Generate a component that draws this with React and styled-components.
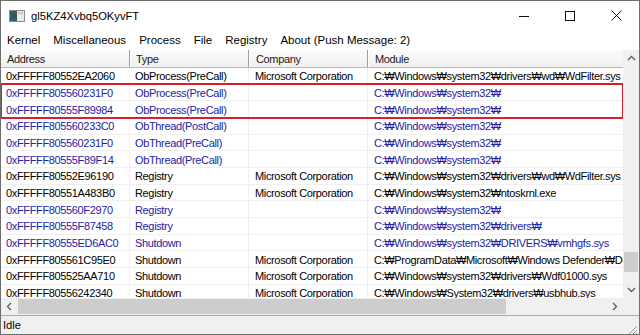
import React from "react";
import styled, { createGlobalStyle } from "styled-components";

const GlobalStyle = createGlobalStyle`
  html, body {
    margin: 0;
    padding: 0;
    background: #ffffff;
  }
  * {
    box-sizing: border-box;
  }
`;

const UI_FONT = `"Liberation Sans", Arial, "Noto Sans CJK KR", sans-serif`;
const ROW_H = 16.67;

const Window = styled.div`
  width: 640px;
  height: 335px;
  border: 1px solid #6e6e6e;
  background: #fff;
  display: flex;
  flex-direction: column;
  font-family: ${UI_FONT};
  overflow: hidden;
`;

const TitleBar = styled.div`
  height: 29px;
  display: flex;
  align-items: center;
  padding-left: 8px;
  background: #fff;
  flex-shrink: 0;
`;

const TitleText = styled.span`
  font-size: 11.2px;
  color: #000;
  margin-left: 6px;
  flex: 1;
`;

const Controls = styled.div`
  display: flex;
  height: 100%;
`;

const CtrlButton = styled.div`
  width: 46px;
  height: 100%;
  display: flex;
  align-items: center;
  justify-content: center;
`;

const MenuBar = styled.div`
  height: 20px;
  display: flex;
  align-items: center;
  padding-left: 0;
  flex-shrink: 0;
`;

const MenuItem = styled.span`
  font-size: 11.5px;
  color: #000;
  padding: 0 7px 0 6px;
`;

const Body = styled.div`
  display: flex;
  height: 248px;
  flex-shrink: 0;
`;

const ListArea = styled.div`
  position: relative;
  flex: 1;
  overflow: hidden;
  font-size: 11px;
  letter-spacing: -0.35px;
`;

const HeaderRow = styled.div`
  display: flex;
  height: 18px;
  background: linear-gradient(#fbfbfb, #f0f0f0);
  border-bottom: 1px solid #b8b8b8;
`;

const HeaderCell = styled.div`
  width: ${(p) => p.$w}px;
  flex-shrink: 0;
  padding-left: ${(p) => p.$pl}px;
  display: flex;
  align-items: center;
  border-right: 1px solid #9f9f9f;
  box-shadow: 1px 0 0 #fff;
  color: #1a1a1a;
  white-space: nowrap;
  flex-grow: ${(p) => (p.$grow ? 1 : 0)};
`;

const Row = styled.div`
  display: flex;
  height: ${ROW_H}px;
  color: ${(p) => (p.$blue ? "#2323a6" : "#000")};
  border-bottom: 1px solid #f0f0f0;
`;

const Cell = styled.div`
  width: ${(p) => p.$w}px;
  flex-shrink: 0;
  flex-grow: ${(p) => (p.$grow ? 1 : 0)};
  padding-left: ${(p) => p.$pl}px;
  padding-top: 1px;
  display: flex;
  align-items: center;
  border-right: 1px solid #f0f0f0;
  white-space: nowrap;
  overflow: hidden;
`;

const Highlight = styled.div`
  position: absolute;
  left: -1px;
  top: ${(p) => p.$top}px;
  width: 624px;
  height: 36px;
  border: 2px solid #d7202b;
  pointer-events: none;
`;

const VScroll = styled.div`
  width: 16px;
  display: flex;
  flex-direction: column;
  background: #f0f0f0;
`;

const ArrowBox = styled.div`
  height: 17px;
  display: flex;
  align-items: center;
  justify-content: center;
  flex-shrink: 0;
`;

const VTrack = styled.div`
  flex: 1;
  display: flex;
  flex-direction: column;
  padding-top: ${(p) => p.$offset}px;
`;

const VThumb = styled.div`
  height: 20px;
  margin: 0 1px;
  background: #cdcdcd;
`;

const HScrollRow = styled.div`
  height: 17px;
  display: flex;
  flex-shrink: 0;
`;

const HScroll = styled.div`
  flex: 1;
  display: flex;
  align-items: center;
  background: #f0f0f0;
`;

const HArrow = styled.div`
  width: 17px;
  height: 100%;
  display: flex;
  align-items: center;
  justify-content: center;
  flex-shrink: 0;
`;

const HTrack = styled.div`
  flex: 1;
  height: 100%;
  display: flex;
  align-items: center;
`;

const HThumb = styled.div`
  height: 15px;
  background: #cdcdcd;
`;

const Corner = styled.div`
  width: 16px;
  background: #f0f0f0;
`;

const StatusBar = styled.div`
  flex: 1;
  display: flex;
  align-items: center;
  background: #f0f0f0;
  border-top: 1px solid #a9a9a9;
`;

const StatusText = styled.span`
  font-size: 11.2px;
  color: #000;
  padding-left: 2px;
  flex: 1;
`;

const Grip = styled.div`
  width: 12px;
  height: 12px;
  align-self: flex-end;
  margin: 0 1px 1px 0;
`;

const COLS = [
  { w: 129, pl: 5 },
  { w: 119, pl: 5 },
  { w: 119, pl: 6 },
  { w: 260, pl: 6, grow: true },
];

const HEADERS = ["Address", "Type", "Company", "Module"];

const W = "\u20A9";
const MS = "Microsoft Corporation";

const rows = [
  ["0xFFFFF80552EA2060", "ObProcess(PreCall)", MS, `C:${W}Windows${W}system32${W}drivers${W}wd${W}WdFilter.sys`, false],
  ["0xFFFFF805560231F0", "ObProcess(PreCall)", "", `C:${W}Windows${W}system32${W}`, true],
  ["0xFFFFF80555F89984", "ObProcess(PreCall)", "", `C:${W}Windows${W}system32${W}`, true],
  ["0xFFFFF805560233C0", "ObThread(PostCall)", "", `C:${W}Windows${W}system32${W}`, true],
  ["0xFFFFF805560231F0", "ObThread(PreCall)", "", `C:${W}Windows${W}system32${W}`, true],
  ["0xFFFFF80555F89F14", "ObThread(PreCall)", "", `C:${W}Windows${W}system32${W}`, true],
  ["0xFFFFF80552E96190", "Registry", MS, `C:${W}Windows${W}system32${W}drivers${W}wd${W}WdFilter.sys`, false],
  ["0xFFFFF80551A483B0", "Registry", MS, `C:${W}Windows${W}system32${W}ntoskrnl.exe`, false],
  ["0xFFFFF805560F2970", "Registry", "", `C:${W}Windows${W}system32${W}`, true],
  ["0xFFFFF80555F87458", "Registry", "", `C:${W}Windows${W}system32${W}drivers${W}`, true],
  ["0xFFFFF80555ED6AC0", "Shutdown", "", `C:${W}Windows${W}system32${W}DRIVERS${W}vmhgfs.sys`, true],
  ["0xFFFFF805561C95E0", "Shutdown", MS, `C:${W}ProgramData${W}Microsoft${W}Windows Defender${W}Definition Updates`, false],
  ["0xFFFFF805525AA710", "Shutdown", MS, `C:${W}Windows${W}system32${W}drivers${W}Wdf01000.sys`, false],
  ["0xFFFFF80556242340", "Shutdown", MS, `C:${W}Windows${W}System32${W}drivers${W}usbhub.sys`, false],
];

const AppIcon = () => (
  <svg width="16" height="12" viewBox="0 0 16 12">
    <rect x="0.5" y="0.5" width="15" height="11" fill="#e9e9e9" stroke="#8a8a8a" />
    <rect x="1" y="1" width="7" height="10" fill="#2f5d62" />
    <rect x="9" y="2" width="5" height="2" fill="#c8c8c8" />
  </svg>
);

const Chevron = ({ dir }) => {
  const paths = {
    up: "M1 6 L4.5 2.5 L8 6",
    down: "M1 3 L4.5 6.5 L8 3",
    left: "M6 1 L2.5 4.5 L6 8",
    right: "M3 1 L6.5 4.5 L3 8",
  };
  return (
    <svg width="9" height="9" viewBox="0 0 9 9">
      <path d={paths[dir]} fill="none" stroke="#606060" strokeWidth="1.4" />
    </svg>
  );
};

export default function App() {
  return (
    <>
      <GlobalStyle />
      <Window>
        <TitleBar>
          <AppIcon />
          <TitleText>gl5KZ4Xvbq5OKyvFT</TitleText>
          <Controls>
            <CtrlButton>
              <svg width="10" height="10" viewBox="0 0 10 10">
                <path d="M0 5.5 H10" stroke="#111" strokeWidth="1" />
              </svg>
            </CtrlButton>
            <CtrlButton>
              <svg width="10" height="10" viewBox="0 0 10 10">
                <rect x="0.5" y="0.5" width="9" height="9" fill="none" stroke="#111" />
              </svg>
            </CtrlButton>
            <CtrlButton>
              <svg width="11" height="11" viewBox="0 0 11 11">
                <path d="M0.5 0.5 L10.5 10.5 M10.5 0.5 L0.5 10.5" stroke="#111" strokeWidth="1" />
              </svg>
            </CtrlButton>
          </Controls>
        </TitleBar>

        <MenuBar>
          {["Kernel", "Miscellaneous", "Process", "File", "Registry", "About (Push Message: 2)"].map((m) => (
            <MenuItem key={m}>{m}</MenuItem>
          ))}
        </MenuBar>

        <Body>
          <ListArea>
            <HeaderRow>
              {HEADERS.map((h, i) => (
                <HeaderCell key={h} $w={COLS[i].w} $pl={COLS[i].pl + 1} $grow={COLS[i].grow}>
                  {h}
                </HeaderCell>
              ))}
            </HeaderRow>
            {rows.map((r, idx) => (
              <Row key={idx} $blue={r[4]}>
                {COLS.map((c, i) => (
                  <Cell key={i} $w={c.w} $pl={c.pl} $grow={c.grow}>
                    {r[i]}
                  </Cell>
                ))}
              </Row>
            ))}
            <Highlight $top={18 + ROW_H - 2} />
          </ListArea>
          <VScroll>
            <ArrowBox>
              <Chevron dir="up" />
            </ArrowBox>
            <VTrack $offset={185}>
              <VThumb />
            </VTrack>
            <ArrowBox>
              <Chevron dir="down" />
            </ArrowBox>
          </VScroll>
        </Body>

        <HScrollRow>
          <HScroll>
            <HArrow>
              <Chevron dir="left" />
            </HArrow>
            <HTrack>
              <HThumb style={{ width: "488px" }} />
            </HTrack>
            <HArrow>
              <Chevron dir="right" />
            </HArrow>
          </HScroll>
          <Corner />
        </HScrollRow>

        <StatusBar>
          <StatusText>Idle</StatusText>
          <Grip>
            <svg width="12" height="12" viewBox="0 0 12 12">
              <path d="M11 3 L3 11 M11 7 L7 11 M11 10 L10 11" stroke="#9a9a9a" strokeWidth="1" />
            </svg>
          </Grip>
        </StatusBar>
      </Window>
    </>
  );
}
